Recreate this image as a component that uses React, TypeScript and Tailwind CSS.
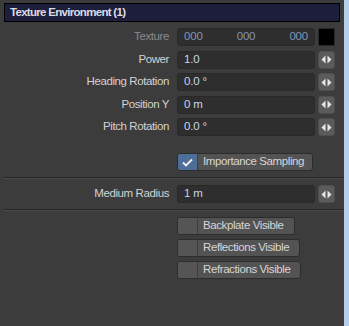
import React from 'react'

const font = { fontFamily: '"Liberation Sans", Arial, sans-serif' }

function Arrows() {
  return (
    <svg width="11" height="9" viewBox="0 0 11 9">
      <path d="M4.5 0.5 L0.5 4.5 L4.5 8.5 Z" fill="#e6e6e6" />
      <path d="M6.5 0.5 L10.5 4.5 L6.5 8.5 Z" fill="#e6e6e6" />
    </svg>
  )
}

function Field({ label, value }: { label: string; value: string }) {
  return (
    <div className="flex items-center h-[18px]">
      <div className="w-[170px] pr-[1px] text-right text-[11.5px] tracking-[-0.4px] text-[#d2d2d2]">{label}</div>
      <div className="ml-[7px] w-[138px] h-[18px] rounded-[3px] bg-[#2e2e2e] border border-[#292929] flex items-center pl-[6px] text-[11.5px] tracking-[-0.2px] text-[#c9d5e8]">
        {value}
      </div>
      <div className="ml-[3px] w-[17px] h-[18px] rounded-[3px] bg-[#5b5b5b] border border-[#4e4e4e] flex items-center justify-center">
        <Arrows />
      </div>
    </div>
  )
}

function Toggle({ label, checked, width }: { label: string; checked?: boolean; width: string }) {
  return (
    <div className={`ml-[177px] h-[18px] ${width} flex rounded-[3px] border border-[#2c2c2c] bg-[#535353] overflow-hidden`}>
      <div className={`w-[20px] h-full flex items-center justify-center border-r border-[#3f3f3f] ${checked ? 'bg-[#4d6e98]' : 'bg-[#555555]'}`}>
        {checked && (
          <svg width="11" height="9" viewBox="0 0 11 9">
            <path d="M1 4.5 L4 7.5 L10 1.5" fill="none" stroke="#f0f0f0" strokeWidth="1.8" />
          </svg>
        )}
      </div>
      <div className="pl-[5px] flex items-center text-[11.5px] tracking-[-0.4px] text-[#d6d6d6]">{label}</div>
    </div>
  )
}

function Separator() {
  return (
    <div className="ml-[4px]">
      <div className="h-[1px] bg-[#262626]" />
      <div className="h-[1px] bg-[#4a4a4a]" />
    </div>
  )
}

export default function App() {
  return (
    <div className="w-[349px] h-[326px] flex" style={font}>
      <div className="w-[344px] h-full bg-[#3c3c3c] flex flex-col">
        <div className="mx-[4px] mt-[3px] h-[19px] border border-black bg-[#1d1d3c] flex items-center pl-[5px] text-[11.5px] font-bold tracking-[-0.7px] text-[#dcdce4]">
          Texture Environment (1)
        </div>

        <div className="mt-[6px] flex flex-col gap-[4.5px]">
          <div className="flex items-center h-[18px]">
            <div className="w-[170px] pr-[1px] text-right text-[11.5px] tracking-[-0.4px] text-[#8a8a8a]">Texture</div>
            <div className="ml-[7px] w-[138px] h-[18px] rounded-[3px] bg-[#2e2e2e] border border-[#292929] flex items-center justify-between pl-[6px] pr-[6px] text-[11.5px] tracking-[-0.2px] text-[#8196b5]">
              <span>000</span>
              <span>000</span>
              <span>000</span>
            </div>
            <div className="ml-[3px] w-[17px] h-[18px] bg-black border border-[#2a2a2a]" />
          </div>
          <Field label="Power" value="1.0" />
          <Field label="Heading Rotation" value="0.0 °" />
          <Field label="Position Y" value="0 m" />
          <Field label="Pitch Rotation" value="0.0 °" />
        </div>

        <div className="mt-[17px]">
          <Toggle label="Importance Sampling" checked width="w-[136px]" />
        </div>

        <div className="mt-[6px]">
          <Separator />
        </div>

        <div className="mt-[6px]">
          <Field label="Medium Radius" value="1 m" />
        </div>

        <div className="mt-[6px]">
          <Separator />
        </div>

        <div className="mt-[6px] flex flex-col gap-[4px]">
          <Toggle label="Backplate Visible" width="w-[118px]" />
          <Toggle label="Reflections Visible" width="w-[123px]" />
          <Toggle label="Refractions Visible" width="w-[124px]" />
        </div>
      </div>
      <div className="w-[5px] h-full bg-[#b8cde8]" />
    </div>
  )
}
